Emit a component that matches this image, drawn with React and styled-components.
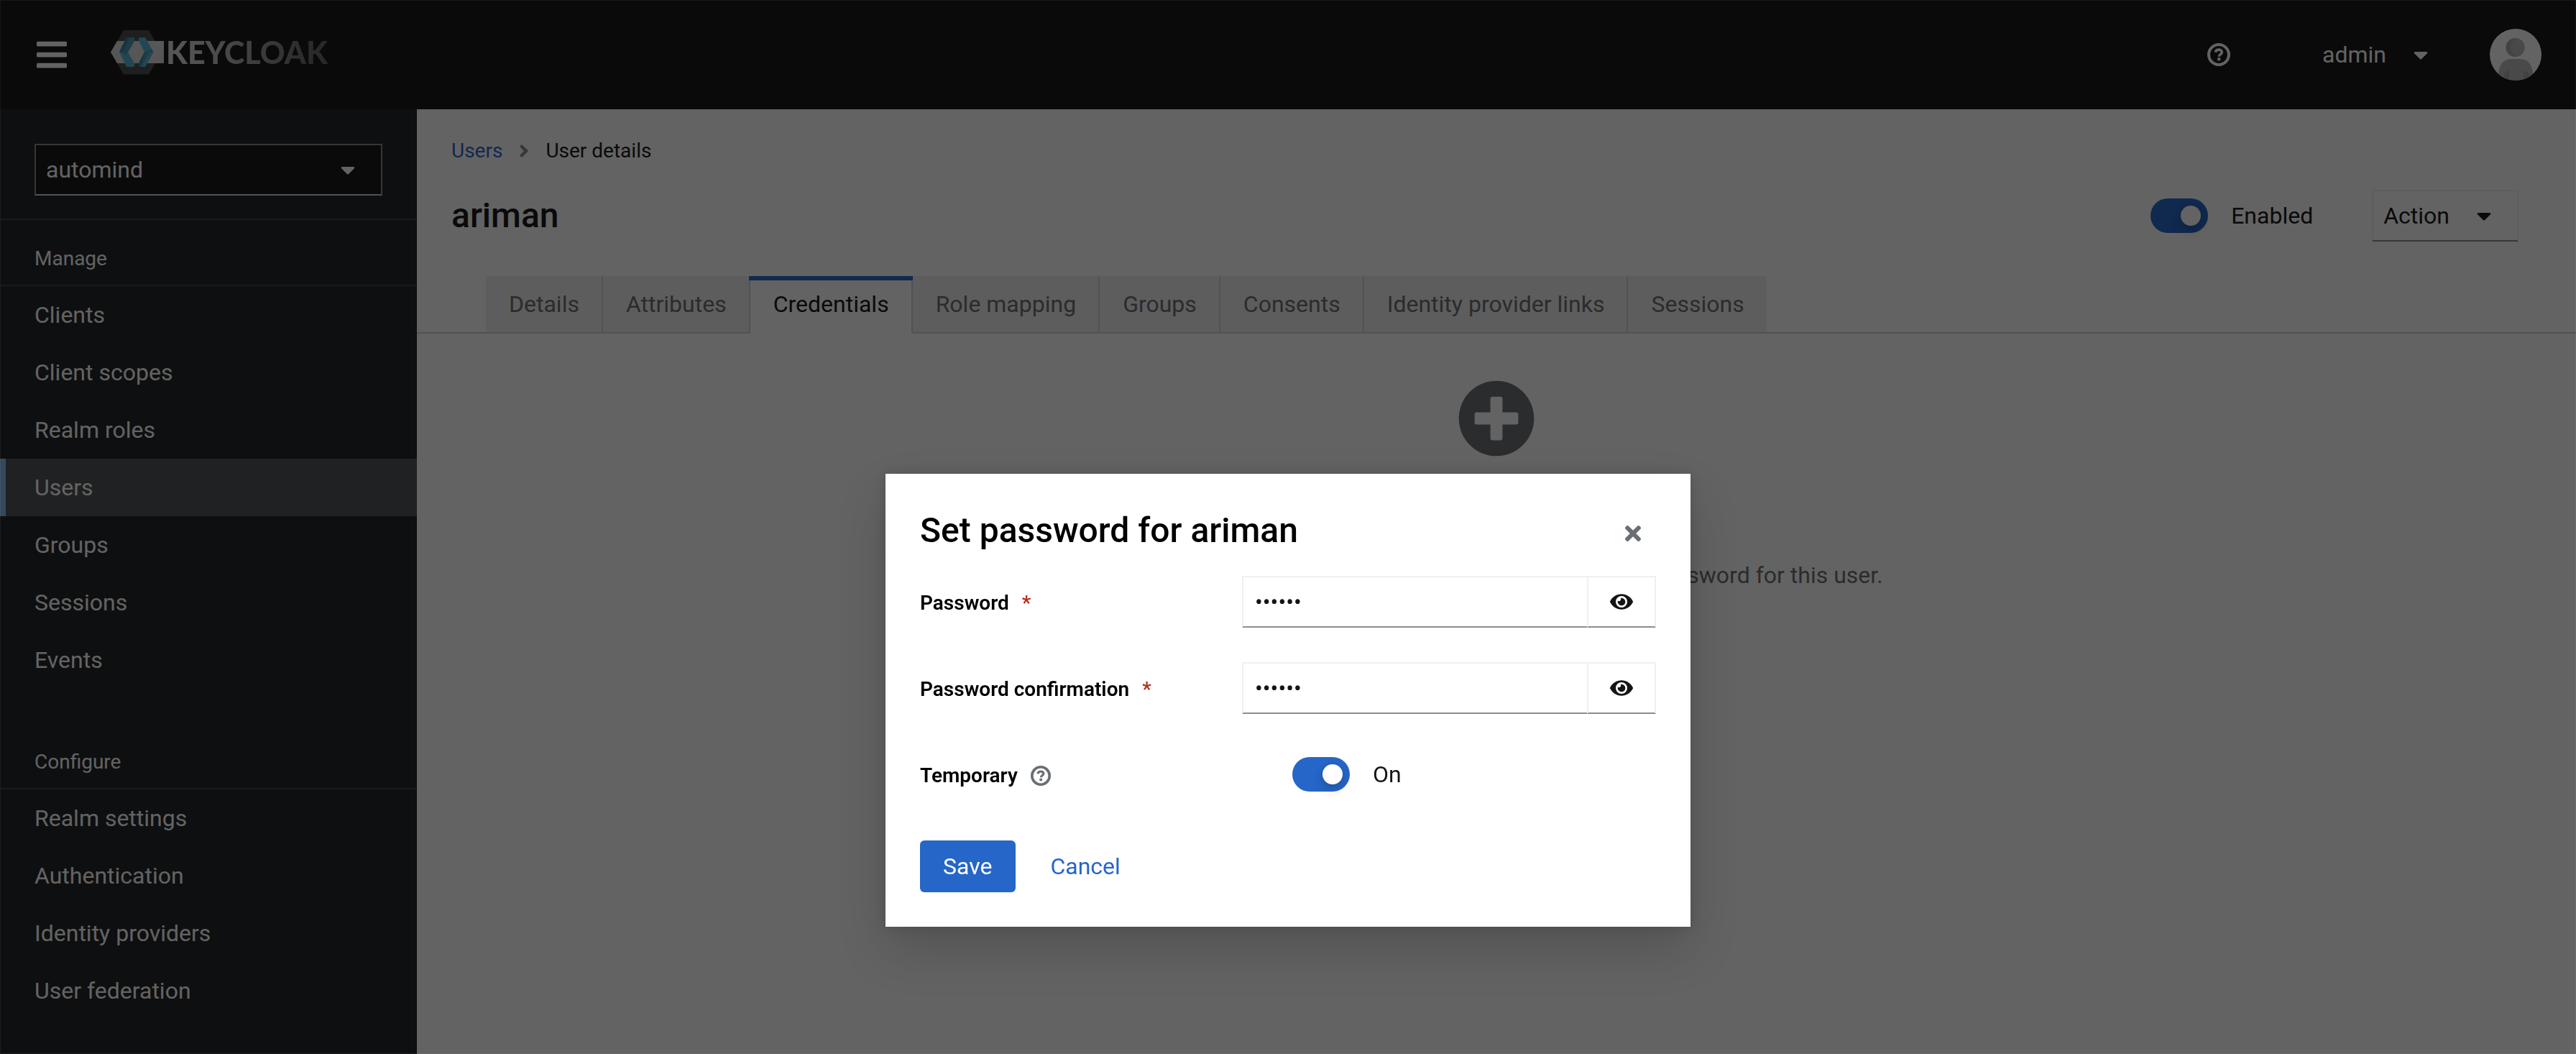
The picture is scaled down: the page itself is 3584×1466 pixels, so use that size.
import React, { useState } from "react";
import styled, { createGlobalStyle, css } from "styled-components";
import {
  FaAngleRight,
  FaBars,
  FaCaretDown,
  FaEye,
  FaPlusCircle,
  FaTimes,
} from "react-icons/fa";

const GlobalStyle = createGlobalStyle`
  *, *::before, *::after { box-sizing: border-box; }
  body {
    margin: 0;
    background: #fff;
    color: #151515;
    font: 400 32px/48px Roboto, "Liberation Sans", sans-serif;
  }
  button, input, select { font: inherit; color: inherit; margin: 0; }
  button { cursor: pointer; }
  svg { display: block; flex: none; }
`;

const Page = styled.div`
  display: flex;
  flex-direction: column;
  min-height: 100vh;
`;

/* Masthead */

const Masthead = styled.header`
  display: flex;
  align-items: center;
  height: 152px;
  padding: 0 48px;
  background: #151515;
  color: #fff;
`;

const PlainButton = styled.button`
  display: flex;
  align-items: center;
  padding: 0;
  border: 0;
  background: none;
  gap: 32px;
`;

const Brand = styled.a`
  display: flex;
  align-items: center;
  height: 62px;
  margin: 0 auto 6px 58px;
  text-decoration: none;
`;

const BrandName = styled.span`
  margin-left: 1px;
  font: 900 43px/62px Lato, "Liberation Sans", sans-serif;
  background: linear-gradient(90deg, #e0e0e0, #d0d0d0 20%, #707070 85%, #666);
  background-clip: text;
  color: transparent;
`;

const Tools = styled.div`
  display: flex;
  align-items: center;
`;

const UserMenu = styled.div`
  margin: 0 80px 0 128px;
`;

/* Sidebar */

const Body = styled.div`
  display: flex;
  flex: 1;
`;

const Sidebar = styled.nav`
  flex: none;
  width: 580px;
  background: #212427;
  color: #fff;
`;

const RealmPicker = styled.div`
  display: grid;
  align-items: center;
  padding: 48px 48px 32px;
  border-bottom: 2px solid #3c3f42;
`;

const RealmSelect = styled.select`
  grid-area: 1 / 1;
  width: 100%;
  height: 72px;
  padding: 0 64px 0 14px;
  border: 2px solid #86888a;
  border-bottom-color: #d2d2d2;
  border-radius: 0;
  background: #151515;
  appearance: none;
`;

const SelectCaret = styled(FaCaretDown)`
  grid-area: 1 / 1;
  justify-self: end;
  margin-right: 32px;
  pointer-events: none;
`;

const NavSection = styled.section`
  & + & { margin-top: 48px; }
`;

const NavTitle = styled.h2`
  margin: 0;
  padding: 33px 48px 15px;
  border-bottom: 2px solid #3c3f42;
  font-size: 28px;
  font-weight: 400;
  line-height: 42px;
`;

const NavList = styled.ul`
  margin: 0;
  padding: 0;
  list-style: none;
`;

const NavLink = styled.a`
  display: block;
  padding: 16px 40px;
  border-left: 8px solid transparent;
  color: #fff;
  text-decoration: none;
  ${(p) =>
    p.$active &&
    css`
      border-left-color: #83bbf0;
      background: #4f5255;
    `}
`;

/* Main area */

const Main = styled.main`
  flex: 1;
  min-width: 0;
  padding-top: 37px;
`;

const Breadcrumb = styled.nav`
  display: flex;
  align-items: center;
  gap: 16px;
  padding: 0 48px;
  font-size: 28px;
  line-height: 42px;
  color: #151515;
`;

const Link = styled.a`
  color: #2666c8;
  text-decoration: none;
`;

const Separator = styled(FaAngleRight)`
  color: #8a8d90;
`;

const TitleBar = styled.div`
  display: flex;
  align-items: center;
  padding: 33px 80px 48px 48px;
`;

const Heading = styled.h1`
  margin: 0 auto 0 0;
  font-size: 48px;
  font-weight: 500;
  line-height: 62px;
`;

const SwitchLabel = styled.label`
  display: flex;
  align-items: center;
  gap: 32px;
`;

const SwitchInput = styled.input`
  display: flex;
  align-items: center;
  width: 80px;
  height: 48px;
  padding: 0 10px;
  border-radius: 24px;
  background: #8a8d90;
  appearance: none;
  &::before {
    content: "";
    width: 28px;
    height: 28px;
    border-radius: 50%;
    background: #fff;
    box-shadow: 0 8px 16px rgba(3, 3, 3, 0.16), 0 0 8px rgba(3, 3, 3, 0.1);
  }
  &:checked { background: #2666c8; }
  &:checked::before { margin-left: auto; }
`;

const ActionButton = styled.button`
  display: flex;
  align-items: center;
  gap: 32px;
  height: 72px;
  margin-left: 82px;
  padding: 0 30px 0 14px;
  border: 2px solid #f0f0f0;
  border-bottom-color: #8a8d90;
  background: none;
`;

const TabList = styled.div`
  display: flex;
  padding: 0 96px;
  box-shadow: inset 0 -2px #d2d2d2;
`;

const Tab = styled.button`
  position: relative;
  height: 80px;
  padding: 0 31px 0 32px;
  border: 0 solid #d2d2d2;
  border-width: 0 2px 2px 0;
  background: #f0f0f0;
  color: #6a6e73;
  &:last-child { border-right-width: 0; }
  ${(p) =>
    p.$active &&
    css`
      border-bottom-color: #fff;
      background: #fff;
      color: #151515;
      &::before {
        content: "";
        position: absolute;
        top: 0;
        left: -2px;
        right: -2px;
        height: 6px;
        background: #2666c8;
      }
    `}
`;

const EmptyState = styled.div`
  display: flex;
  flex-direction: column;
  align-items: center;
  padding: 64px 48px;
  color: #6a6e73;
`;

const EmptyTitle = styled.h2`
  margin: 40px 0 44px;
  font-size: 40px;
  font-weight: 500;
  line-height: 56px;
  color: #151515;
`;

const EmptyText = styled.p`
  margin: 0;
`;

/* Dialog */

const Backdrop = styled.div`
  position: fixed;
  inset: 0;
  display: flex;
  align-items: flex-start;
  justify-content: center;
  padding-top: 659px;
  background: rgba(3, 3, 3, 0.62);
  box-shadow: inset 0 0 0 1px rgba(255, 255, 255, 0.06);
`;

const Dialog = styled.div`
  width: 1120px;
  padding: 48px;
  background: #fff;
  color: #000;
  box-shadow: 0 32px 64px rgba(3, 3, 3, 0.16), 0 0 16px rgba(3, 3, 3, 0.12);
`;

const DialogHeader = styled.div`
  display: flex;
  align-items: flex-start;
  justify-content: space-between;
  margin-bottom: 24px;
`;

const CloseButton = styled.button`
  display: grid;
  place-items: center;
  width: 64px;
  height: 70px;
  padding: 0;
  border: 0;
  background: none;
  color: #6a6e73;
`;

const Form = styled.form`
  display: grid;
  gap: 48px;
`;

const FormRow = styled.div`
  display: grid;
  grid-template-columns: 7fr 9fr;
  align-items: center;
  min-height: 72px;
`;

const FieldLabel = styled.div`
  display: flex;
  align-items: center;
  gap: 18px;
  font-size: 28px;
  font-weight: 600;
  line-height: 42px;
  padding-top: 3px;
`;

const Required = styled.span`
  color: #b92f1d;
`;

const HelpButton = styled(PlainButton)`
  color: #6a6e73;
`;

const InputGroup = styled.div`
  display: flex;
`;

const PasswordInput = styled.input`
  flex: 1;
  min-width: 0;
  height: 72px;
  padding: 0 16px;
  border: 2px solid #f0f0f0;
  border-right: 0;
  border-bottom-color: #8a8d90;
  border-radius: 0;
  background: #fff;
  color: #151515;
  outline: none;
`;

const RevealButton = styled.button`
  display: grid;
  place-items: center;
  width: 96px;
  padding: 0;
  border: 2px solid #f0f0f0;
  border-bottom-color: #8a8d90;
  background: #fff;
  color: #151515;
`;

const SwitchCell = styled.div`
  padding-left: 70px;
  color: #151515;
`;

const Actions = styled.div`
  display: flex;
  gap: 16px;
  margin-top: 8px;
`;

const Button = styled.button`
  height: 72px;
  padding: 0 33px 0 32px;
  border: 0;
  border-radius: 6px;
  background: ${(p) => (p.$primary ? "#2666c8" : "none")};
  color: ${(p) => (p.$primary ? "#fff" : "#2666c8")};
`;

function BrandMark() {
  return (
    <svg width="76" height="62" viewBox="154 42 76 62" aria-hidden="true">
      <defs>
        <linearGradient id="band" x1="0" x2="1" y1="1" y2="0">
          <stop offset="0" stopColor="#d8d8d8" />
          <stop offset="1" stopColor="#e2e2e2" />
        </linearGradient>
      </defs>
      <path d="M172 42h35l18 31-18 30.500h-35L154 73z" fill="#4d4d4d" />
      <path d="M163 57h65v31h-65l-9-15.500z" fill="url(#band)" />
      <path d="M176 52h10.500l1 4-9.500 16.500 9.500 16.500-1 4H176l-10-20.500z" fill="#58b4d8" />
      <path d="M176 52h5l-10.500 20.500H166z" fill="#3b8099" />
      <path d="M181 52h5.500l1 4-9.500 16.500-4 5-3.500-5z" fill="#4799b8" />
      <path d="M194 52h8l11.500 20.500-11.500 20.500h-8l-1.500-4 8.500-16.500-8.500-16.500z" fill="#58b4d8" />
      <path d="M201 72.500h6L196 93h-2l-1.500-4z" fill="#3b8099" />
      <path d="M201 72.500l10-4 2.500 4h-6.500l-11 20.500z" fill="#4799b8" />
    </svg>
  );
}

function HelpIcon({ size }) {
  return (
    <svg width={size} height={size} viewBox="0 0 28 28" fill="none" aria-hidden="true">
      <circle cx="14" cy="14" r="12.200" stroke="currentColor" strokeWidth="3.600" />
      <path
        d="M10 11.200c.3-2 1.800-3.200 4-3.200s3.800 1.200 3.800 3.100c0 2.600-3.400 2.300-3.400 5.200"
        stroke="currentColor"
        strokeWidth="3.200"
      />
      <rect x="12.400" y="17.800" width="3.600" height="3.400" fill="currentColor" />
    </svg>
  );
}

function Avatar() {
  return (
    <svg width="72" height="72" viewBox="0 0 72 72" role="img" aria-label="admin avatar">
      <defs>
        <clipPath id="round">
          <circle cx="36" cy="36" r="36" />
        </clipPath>
        <clipPath id="head">
          <circle cx="35.500" cy="26" r="13" />
        </clipPath>
      </defs>
      <g clipPath="url(#round)">
        <rect width="72" height="72" fill="#fff" />
        <circle cx="35.500" cy="26" r="13" fill="#a8a8a8" />
        <circle cx="42" cy="26" r="13" fill="#bcbcbc" clipPath="url(#head)" />
        <path d="M12 72V62C13 52 18 42 30 42h12c12 0 17 9 18 20v10z" fill="#bcbcbc" />
        <path d="M20 72v-8c1-4 4-6 7-6v14zM46 59c4-1 7 1 9 4l-2 9h-5z" fill="#a8a8a8" />
      </g>
    </svg>
  );
}

const NAV = [
  {
    title: "Manage",
    items: ["Clients", "Client scopes", "Realm roles", "Users", "Groups", "Sessions", "Events"],
  },
  {
    title: "Configure",
    items: ["Realm settings", "Authentication", "Identity providers", "User federation"],
  },
];

const TABS = [
  "Details",
  "Attributes",
  "Credentials",
  "Role mapping",
  "Groups",
  "Consents",
  "Identity provider links",
  "Sessions",
];

function Switch({ id, label }) {
  const [on, setOn] = useState(true);
  return (
    <SwitchLabel htmlFor={id}>
      <SwitchInput
        id={id}
        type="checkbox"
        role="switch"
        checked={on}
        onChange={(e) => setOn(e.target.checked)}
      />
      {label}
    </SwitchLabel>
  );
}

function PasswordRow({ id, label }) {
  const [value, setValue] = useState("secret");
  const [visible, setVisible] = useState(false);
  return (
    <FormRow>
      <FieldLabel>
        <label htmlFor={id}>{label}</label>
        <Required aria-hidden="true">*</Required>
      </FieldLabel>
      <InputGroup>
        <PasswordInput
          id={id}
          type={visible ? "text" : "password"}
          value={value}
          onChange={(e) => setValue(e.target.value)}
          required
        />
        <RevealButton
          type="button"
          aria-label="Show password"
          onClick={() => setVisible(!visible)}
        >
          <FaEye />
        </RevealButton>
      </InputGroup>
    </FormRow>
  );
}

export default function App() {
  return (
    <>
      <GlobalStyle />
      <Page>
        <Masthead>
          <PlainButton aria-label="Global navigation">
            <FaBars size={48} />
          </PlainButton>
          <Brand href="#home">
            <BrandMark />
            <BrandName>KEYCLOAK</BrandName>
          </Brand>
          <Tools>
            <PlainButton aria-label="Help">
              <HelpIcon size={32} />
            </PlainButton>
            <UserMenu>
              <PlainButton>
                admin <FaCaretDown />
              </PlainButton>
            </UserMenu>
            <Avatar />
          </Tools>
        </Masthead>
        <Body>
          <Sidebar aria-label="Realm">
            <RealmPicker>
              <RealmSelect aria-label="Realm" defaultValue="automind">
                <option>automind</option>
              </RealmSelect>
              <SelectCaret />
            </RealmPicker>
            {NAV.map((section) => (
              <NavSection key={section.title}>
                <NavTitle>{section.title}</NavTitle>
                <NavList>
                  {section.items.map((item) => (
                    <li key={item}>
                      <NavLink href="#nav" $active={item === "Users"}>
                        {item}
                      </NavLink>
                    </li>
                  ))}
                </NavList>
              </NavSection>
            ))}
          </Sidebar>
          <Main>
            <Breadcrumb aria-label="Breadcrumb">
              <Link href="#users">Users</Link>
              <Separator />
              <span>User details</span>
            </Breadcrumb>
            <TitleBar>
              <Heading>ariman</Heading>
              <Switch id="enabled" label="Enabled" />
              <ActionButton>
                Action <FaCaretDown />
              </ActionButton>
            </TitleBar>
            <TabList role="tablist">
              {TABS.map((tab) => (
                <Tab
                  key={tab}
                  role="tab"
                  aria-selected={tab === "Credentials"}
                  $active={tab === "Credentials"}
                >
                  {tab}
                </Tab>
              ))}
            </TabList>
            <EmptyState>
              <FaPlusCircle size={108} />
              <EmptyTitle>No credentials</EmptyTitle>
              <EmptyText>
                This user does not have any credentials. You can set password for this user.
              </EmptyText>
            </EmptyState>
          </Main>
        </Body>
      </Page>
      <Backdrop>
        <Dialog role="dialog" aria-modal="true" aria-labelledby="dialog-title">
          <DialogHeader>
            <Heading as="h2" id="dialog-title">
              Set password for ariman
            </Heading>
            <CloseButton aria-label="Close">
              <FaTimes />
            </CloseButton>
          </DialogHeader>
          <Form onSubmit={(e) => e.preventDefault()}>
            <PasswordRow id="password" label="Password" />
            <PasswordRow id="confirmation" label="Password confirmation" />
            <FormRow>
              <FieldLabel>
                <label htmlFor="temporary">Temporary</label>
                <HelpButton type="button" aria-label="Help for Temporary">
                  <HelpIcon size={28} />
                </HelpButton>
              </FieldLabel>
              <SwitchCell>
                <Switch id="temporary" label="On" />
              </SwitchCell>
            </FormRow>
            <Actions>
              <Button type="submit" $primary>
                Save
              </Button>
              <Button type="button">Cancel</Button>
            </Actions>
          </Form>
        </Dialog>
      </Backdrop>
    </>
  );
}
